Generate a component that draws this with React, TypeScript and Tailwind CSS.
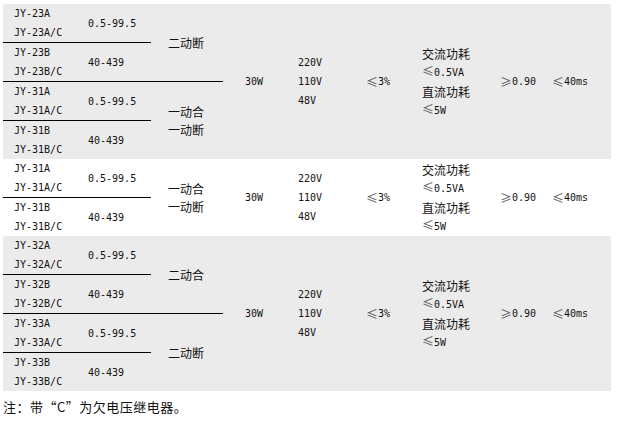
import React from 'react';

type Group = { a: string; b: string; contact: string[] };
type Section = { bg: string; groups: Group[] };

const mono = "font-['DejaVu_Sans_Mono','Liberation_Mono',monospace] text-[10px]";
const cjk = "font-['Noto_Sans_CJK_SC',sans-serif] text-[12px]";

const sections: Section[] = [
  {
    bg: 'bg-[#ebebeb]',
    groups: [
      { a: '23', b: '23', contact: ['二动断'] },
      { a: '31', b: '31', contact: ['一动合', '一动断'] },
    ],
  },
  {
    bg: 'bg-white',
    groups: [{ a: '31', b: '31', contact: ['一动合', '一动断'] }],
  },
  {
    bg: 'bg-[#ebebeb]',
    groups: [
      { a: '32', b: '32', contact: ['二动合'] },
      { a: '33', b: '33', contact: ['二动断'] },
    ],
  },
];

const Sym: React.FC<{ c: string }> = ({ c }) => (
  <span className={`${cjk} leading-none text-[#555]`}>{c}</span>
);

const Pair: React.FC<{ m1: string; m2: string; range: string }> = ({ m1, m2, range }) => (
  <div className="flex h-[38px]">
    <div className="w-[77px] pl-[11px]">
      <div className={`h-[19px] flex items-center ${mono}`}>{m1}</div>
      <div className={`h-[19px] flex items-center ${mono}`}>{m2}</div>
    </div>
    <div className={`flex-1 pl-[8px] flex items-center ${mono}`}>{range}</div>
  </div>
);

const GroupBlock: React.FC<{ g: Group }> = ({ g }) => (
  <div className="flex">
    <div className="w-[148px]">
      <Pair m1={`JY-${g.a}A`} m2={`JY-${g.a}A/C`} range="0.5-99.5" />
      <div className="h-px bg-black" />
      <Pair m1={`JY-${g.b}B`} m2={`JY-${g.b}B/C`} range="40-439" />
    </div>
    <div className={`flex-1 pl-[17px] flex flex-col justify-center leading-[18px] ${cjk}`}>
      {g.contact.map((c) => (
        <div key={c}>{c}</div>
      ))}
    </div>
  </div>
);

const SectionRow: React.FC<{ s: Section }> = ({ s }) => (
  <div className={`flex ${s.bg}`}>
    <div className="w-[220px]">
      {s.groups.map((g, i) => (
        <React.Fragment key={i}>
          {i > 0 && <div className="h-px bg-black" />}
          <GroupBlock g={g} />
        </React.Fragment>
      ))}
    </div>
    <div className={`w-[67px] pl-[22px] flex items-center ${mono}`}>30W</div>
    <div className={`w-[66px] pl-[8px] flex flex-col justify-center leading-[19px] ${mono}`}>
      <div>220V</div>
      <div>110V</div>
      <div>48V</div>
    </div>
    <div className={`w-[60px] pl-[10px] flex items-center ${mono}`}>
      <Sym c="≤" />3%
    </div>
    <div className={`w-[76px] pl-[6px] flex flex-col justify-center ${mono}`}>
      <div className={`${cjk} h-[19px] leading-[19px]`}>交流功耗</div>
      <div className="h-[19px] leading-[19px]">
        <Sym c="≤" />0.5VA
      </div>
      <div className={`${cjk} h-[19px] leading-[19px]`}>直流功耗</div>
      <div className="h-[19px] leading-[19px]">
        <Sym c="≤" />5W
      </div>
    </div>
    <div className={`w-[52px] pl-[8px] flex items-center ${mono}`}>
      <Sym c="≥" />0.90
    </div>
    <div className={`flex-1 pl-[8px] flex items-center ${mono}`}>
      <Sym c="≤" />40ms
    </div>
  </div>
);

export default function App() {
  return (
    <div className="w-[623px] h-[437px] bg-white text-[#111] pt-[4px] pl-[3px]">
      <div className="w-[608px]">
        {sections.map((s, i) => (
          <SectionRow key={i} s={s} />
        ))}
      </div>
      <p className="mt-[7px] font-['Noto_Sans_CJK_SC',sans-serif] text-[13px] leading-[18px] tracking-[0.5px]">
        注：带“C”为欠电压继电器。
      </p>
    </div>
  );
}
